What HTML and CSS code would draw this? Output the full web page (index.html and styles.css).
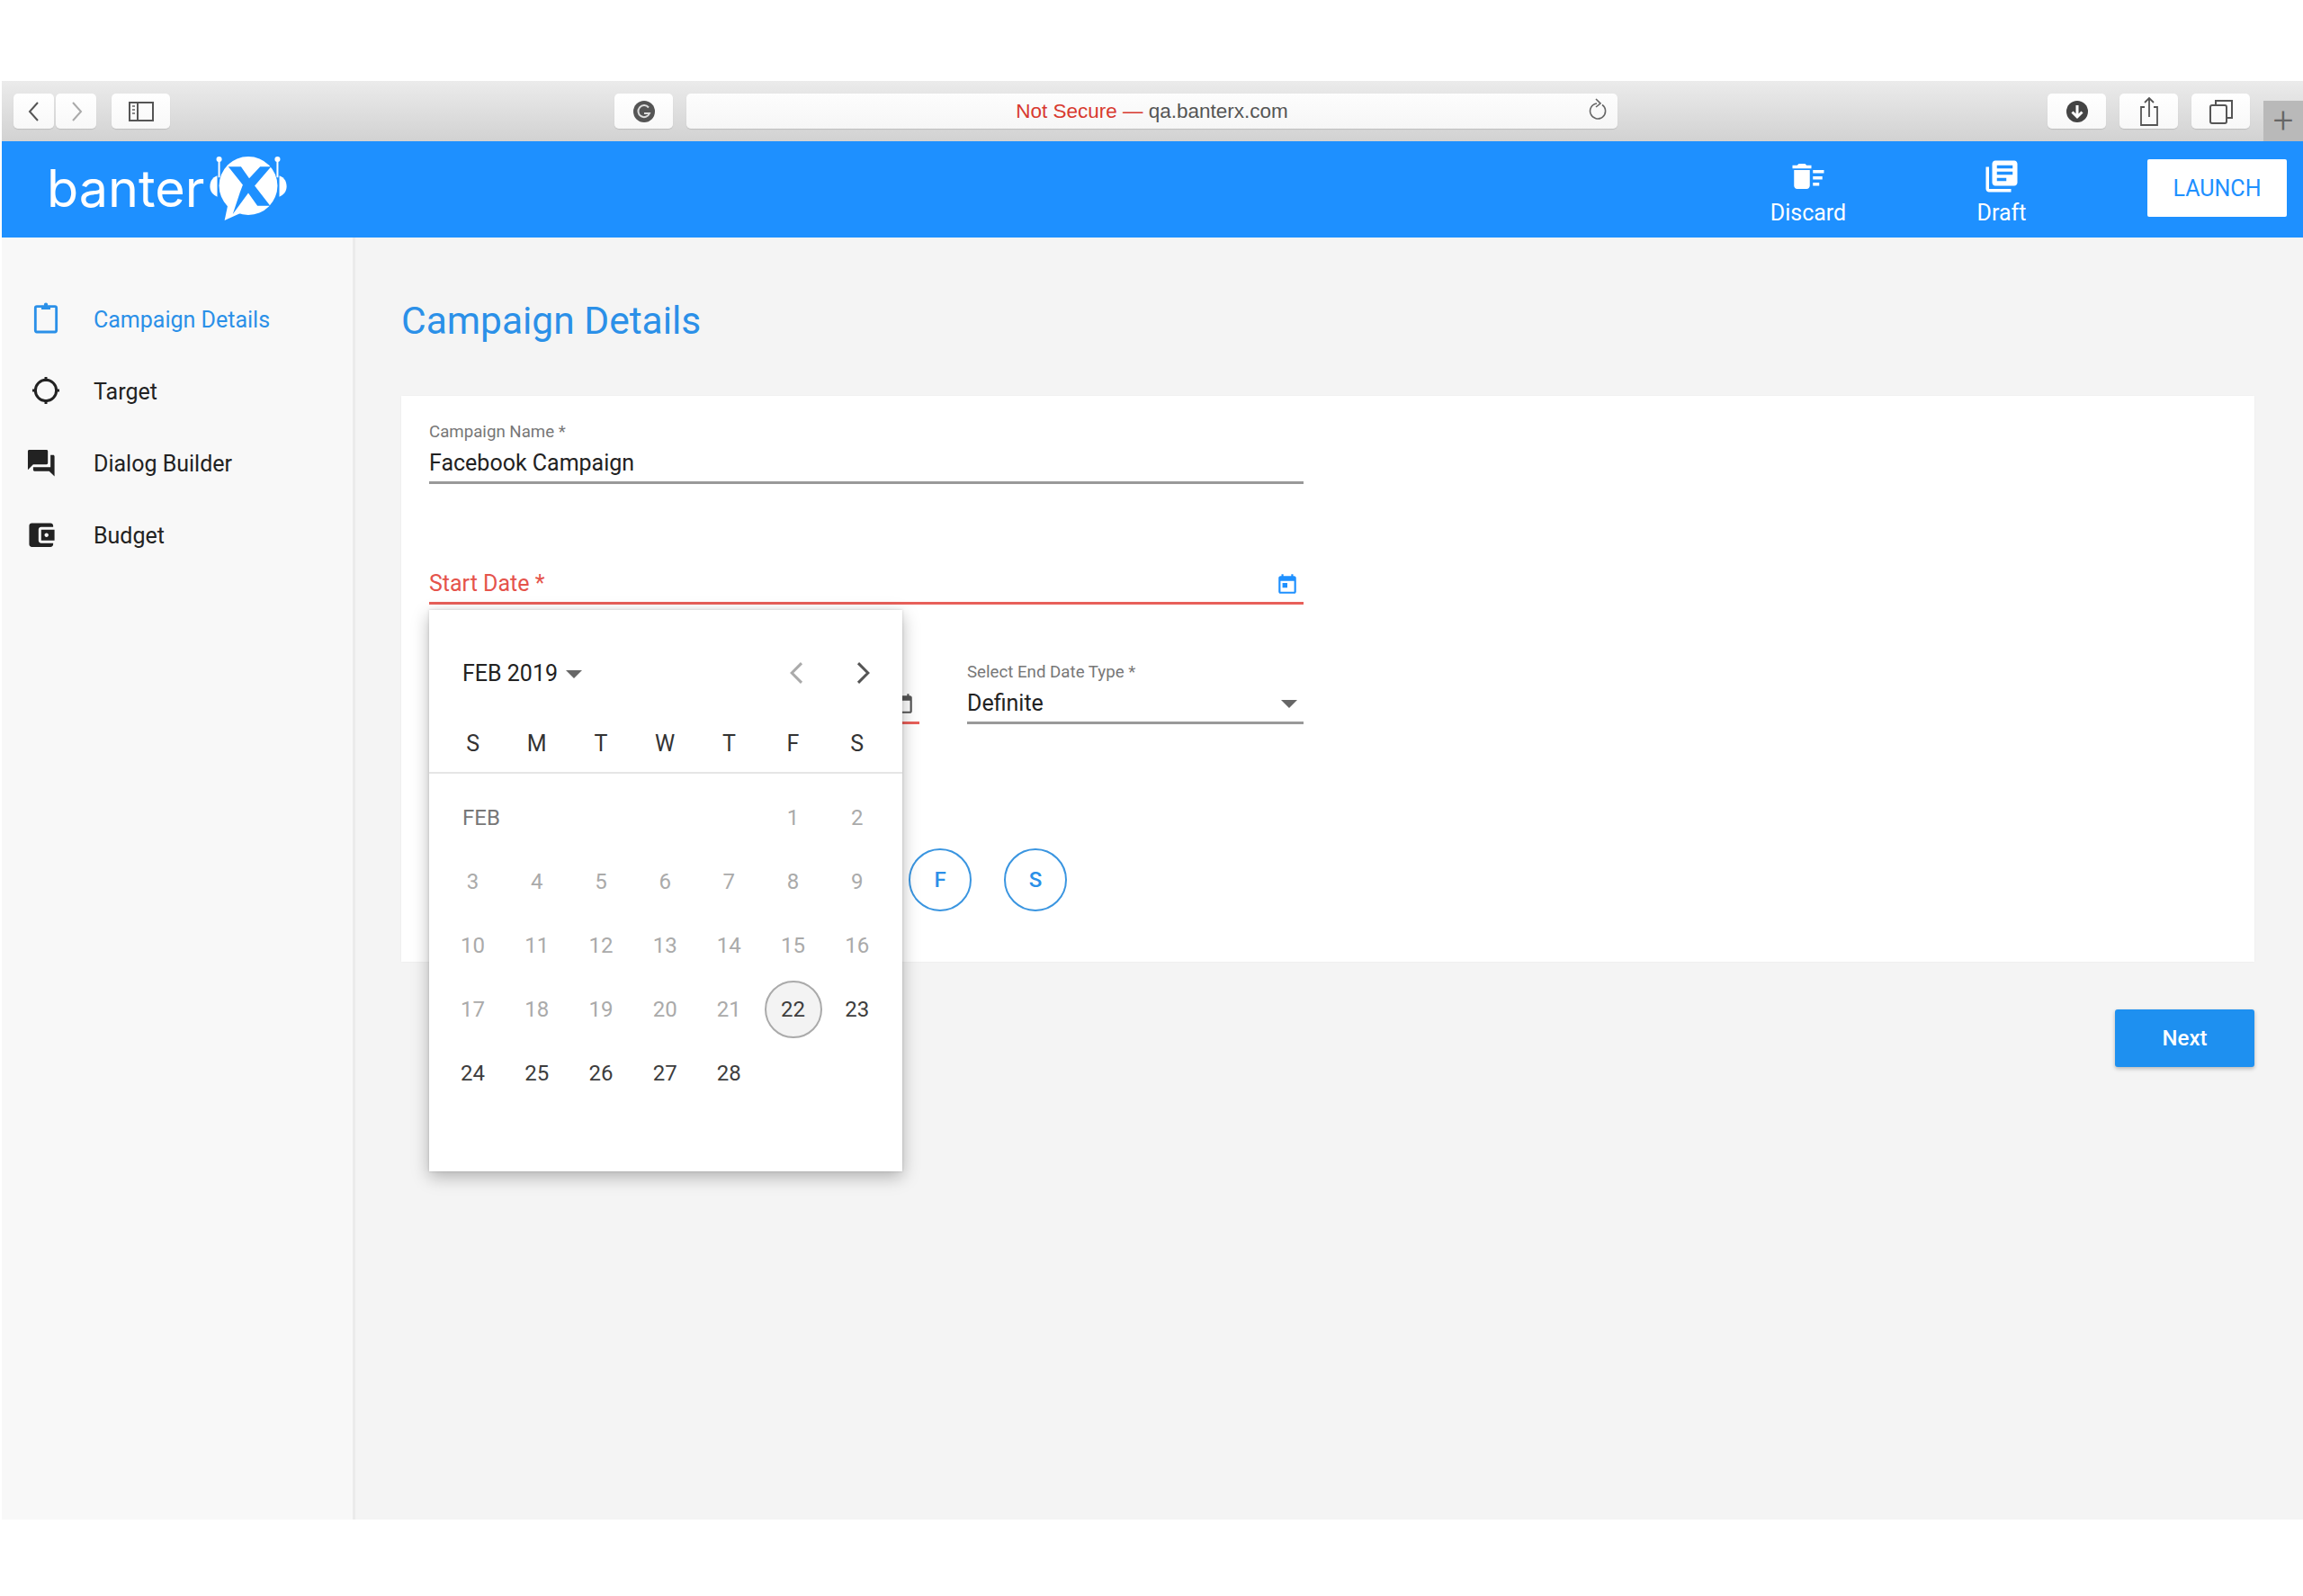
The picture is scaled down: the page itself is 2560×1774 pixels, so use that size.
FILE: index.html
```html
<!DOCTYPE html>
<html lang="en">
<head>
<meta charset="utf-8">
<title>banterX - Campaign Details</title>
<link rel="stylesheet" href="styles.css">
</head>
<body>
<div class="window">
  <div class="browser-bar">
    <div class="tb-group nav-group">
      <span class="tb-btn tb-nav"><svg width="22" height="26" viewBox="0 0 22 26"><path d="M15 3 6 13l9 10" fill="none" stroke="#555" stroke-width="2"/></svg></span>
      <span class="tb-btn tb-nav"><svg width="22" height="26" viewBox="0 0 22 26"><path d="m7 3 9 10-9 10" fill="none" stroke="#aaa" stroke-width="2"/></svg></span>
      <span class="tb-btn tb-wide sidebar-btn"><svg width="28" height="24" viewBox="0 0 28 24"><rect x="1" y="2" width="26" height="20" fill="none" stroke="#555" stroke-width="2"/><path d="M10 2v20" stroke="#555" stroke-width="2"/><path d="M4 6h3M4 10h3M4 14h3" stroke="#888" stroke-width="2"/></svg></span>
    </div>
    <span class="tb-btn tb-wide g-btn"><svg width="28" height="28" viewBox="0 0 28 28"><circle cx="14" cy="14" r="12" fill="#555"/><path d="M19 9.500a6.500 6.500 0 1 0 1 6.500h-6" fill="none" stroke="#ddd" stroke-width="2"/></svg></span>
    <div class="url-bar">
      <span class="url-text"><span class="url-warn">Not Secure —</span> qa.banterx.com</span>
      <svg class="reload" width="24" height="28" viewBox="0 0 24 28"><path d="M17 8.500a8.500 8.500 0 1 1-6-1.500" fill="none" stroke="#666" stroke-width="1.600"/><path d="m10 2 5 5-5 4" fill="none" stroke="#666" stroke-width="1.600"/></svg>
    </div>
    <div class="tb-group right-group">
      <span class="tb-btn tb-wide"><svg width="28" height="28" viewBox="0 0 28 28"><circle cx="14" cy="14" r="12" fill="#444"/><path d="M14 7v13M8.500 14.500 14 20l5.500-5.500" fill="none" stroke="#fff" stroke-width="3"/></svg></span>
      <span class="tb-btn tb-wide"><svg width="24" height="36" viewBox="0 0 24 36"><path d="M7 13H3v20h18V13h-4" fill="none" stroke="#555" stroke-width="1.800"/><path d="M12 24V3M7 8l5-5 5 5" fill="none" stroke="#555" stroke-width="1.800"/></svg></span>
      <span class="tb-btn tb-wide"><svg width="28" height="30" viewBox="0 0 28 30"><rect x="2" y="8" width="18" height="20" rx="2" fill="none" stroke="#555" stroke-width="2"/><path d="M8 8V3h18v19h-6" fill="none" stroke="#555" stroke-width="2"/></svg></span>
    </div>
    <span class="new-tab">+</span>
  </div>

  <header class="app-header">
    <div class="logo">
      <span class="logo-word">banter</span>
      <svg class="logo-mark" width="94" height="73" viewBox="0 0 92 72">
        <path d="M14 4v20M78 4v20" stroke="#fff" stroke-width="2"/>
        <circle cx="14" cy="4" r="3" fill="#fff"/><circle cx="78" cy="4" r="3" fill="#fff"/>
        <path d="M12 22c-6 2-8 7-8 12s3 9 8 11z" fill="#fff"/>
        <path d="M80 22c6 2 8 7 8 12s-3 9-8 11z" fill="#fff"/>
        <circle cx="46" cy="33" r="32" fill="#fff"/>
        <path d="M24 52 20 71l20-9z" fill="#fff"/>
        <path d="M24 12h14l9 13 12-13h12L53 33l17 22H56L46 41 29 64l8-24 3-8z" fill="#1e90ff"/>
      </svg>
    </div>
    <div class="header-actions">
      <div class="header-action action-discard">
        <svg width="42" height="42" viewBox="0 0 24 24"><path fill="#fff" d="M15 16h4v2h-4zm0-8h7v2h-7zm0 4h6v2h-6zM3 18c0 1.100.9 2 2 2h6c1.100 0 2-.9 2-2V8H3v10zM14 5h-3l-1-1H6L5 5H2v2h12z"/></svg>
        <span>Discard</span>
      </div>
      <div class="header-action action-draft">
        <svg width="42" height="42" viewBox="0 0 24 24"><path fill="#fff" d="M4 6H2v14c0 1.100.9 2 2 2h14v-2H4V6zm16-4H8c-1.100 0-2 .9-2 2v12c0 1.100.9 2 2 2h12c1.100 0 2-.9 2-2V4c0-1.100-.9-2-2-2zm-1 9H9V9h10v2zm-4 4H9v-2h6v2zm4-8H9V5h10v2z"/></svg>
        <span>Draft</span>
      </div>
      <button class="launch-btn">LAUNCH</button>
    </div>
  </header>

  <div class="app-body">
    <nav class="sidebar">
      <a class="nav-item is-active">
        <svg width="40" height="40" viewBox="-1.800 0 24 24"><path d="M6 4h12a1 1 0 0 1 1 1v15a1 1 0 0 1-1 1H6a1 1 0 0 1-1-1V5a1 1 0 0 1 1-1z" fill="none" stroke="#2b90e8" stroke-width="1.700"/><path d="M9 3.500h6V6H9z" fill="#2b90e8"/><circle cx="12" cy="2.800" r="1.300" fill="#2b90e8"/></svg>
        <span>Campaign Details</span>
      </a>
      <a class="nav-item">
        <svg width="40" height="40" viewBox="-1.800 0 24 24"><circle cx="12" cy="12" r="7" fill="none" stroke="#222" stroke-width="1.800"/><path d="M12 3v3M12 18v3M3 12h3M18 12h3" stroke="#222" stroke-width="1.800"/></svg>
        <span>Target</span>
      </a>
      <a class="nav-item">
        <svg width="40" height="40" viewBox="0 -2 27 27"><path fill="#222" d="M21 6h-2v9H6v2c0 .55.45 1 1 1h11l4 4V7c0-.55-.45-1-1-1zm-4 6V3c0-.55-.45-1-1-1H3c-.55 0-1 .45-1 1v14l4-4h10c.55 0 1-.45 1-1z"/></svg>
        <span>Dialog Builder</span>
      </a>
      <a class="nav-item">
        <svg width="40" height="40" viewBox="0 -2 27 27"><path fill="#222" d="M21 18v1c0 1.100-.9 2-2 2H5c-1.110 0-2-.9-2-2V5c0-1.100.89-2 2-2h14c1.100 0 2 .9 2 2v1h-9c-1.110 0-2 .9-2 2v8c0 1.100.89 2 2 2h9zm-9-2h10V8H12v8zm4-2.500c-.83 0-1.500-.67-1.500-1.500s.67-1.500 1.500-1.500 1.500.67 1.500 1.500-.67 1.500-1.500 1.500z"/></svg>
        <span>Budget</span>
      </a>
    </nav>

    <main class="main">
      <h1 class="page-title">Campaign Details</h1>
      <section class="card">
        <div class="field">
          <label class="field-label">Campaign Name *</label>
          <div class="field-value">Facebook Campaign</div>
        </div>
        <div class="field field-start">
          <div class="field-value is-error">Start Date *
            <svg class="cal-icon" width="26" height="26" viewBox="0 0 24 24"><path fill="#1e90ff" d="M19 4h-1V2h-2v2H8V2H6v2H5c-1.100 0-2 .9-2 2v14c0 1.100.9 2 2 2h14c1.100 0 2-.9 2-2V6c0-1.100-.9-2-2-2zm0 16H5V9h14v11zM7 11h5v5H7z"/></svg>
          </div>
        </div>
        <div class="field-row">
          <div class="field field-hidden">
            <div class="field-value is-error">
              <svg class="cal-icon cal-dark" width="26" height="26" viewBox="0 0 24 24"><path fill="#555" d="M19 4h-1V2h-2v2H8V2H6v2H5c-1.100 0-2 .9-2 2v14c0 1.100.9 2 2 2h14c1.100 0 2-.9 2-2V6c0-1.100-.9-2-2-2zm0 16H5V9h14v11z"/></svg>
            </div>
          </div>
          <div class="field">
            <label class="field-label">Select End Date Type *</label>
            <div class="field-value">Definite<i class="select-caret"></i></div>
          </div>
        </div>
        <div class="weekday-circles">
          <span class="day-circle"></span><span class="day-circle"></span><span class="day-circle"></span><span class="day-circle"></span><span class="day-circle"></span>
          <span class="day-circle">F</span><span class="day-circle">S</span>
        </div>

        <div class="datepicker">
          <div class="dp-head">
            <span class="dp-month">FEB 2019<i class="dp-caret"></i></span>
            <span class="dp-arrows">
              <svg width="40" height="40" viewBox="0 0 24 24"><path d="M15 5.500 8.500 12l6.500 6.500" fill="none" stroke="#aaa" stroke-width="1.800"/></svg>
              <svg width="40" height="40" viewBox="0 0 24 24"><path d="M9 5.500 15.500 12 9 18.500" fill="none" stroke="#555" stroke-width="1.800"/></svg>
            </span>
          </div>
          <div class="dp-week"><span>S</span><span>M</span><span>T</span><span>W</span><span>T</span><span>F</span><span>S</span></div>
          <div class="dp-grid">
            <span class="dp-label">FEB</span><span class="off">1</span><span class="off">2</span>
            <span class="off">3</span><span class="off">4</span><span class="off">5</span><span class="off">6</span><span class="off">7</span><span class="off">8</span><span class="off">9</span>
            <span class="off">10</span><span class="off">11</span><span class="off">12</span><span class="off">13</span><span class="off">14</span><span class="off">15</span><span class="off">16</span>
            <span class="off">17</span><span class="off">18</span><span class="off">19</span><span class="off">20</span><span class="off">21</span><span><b class="today">22</b></span><span>23</span>
            <span>24</span><span>25</span><span>26</span><span>27</span><span>28</span>
          </div>
        </div>
      </section>
      <div class="actions"><button class="next-btn">Next</button></div>
    </main>
  </div>
</div>
</body>
</html>
```

FILE: styles.css
```css
* { box-sizing: border-box; }
html, body { margin: 0; background: #fff; }
body { height: 1774px; padding: 90px 0 85px 2px; font-family: Roboto, "Liberation Sans", sans-serif; overflow: hidden; }
.window { height: 1599px; display: flex; flex-direction: column; }

.browser-bar { height: 67px; flex: none; display: flex; align-items: center; padding-left: 13px; position: relative; background: linear-gradient(#ebebeb, #d2d2d2); }
.tb-group { display: flex; }
.tb-btn { height: 39px; display: flex; align-items: center; justify-content: center; background: linear-gradient(#ffffff, #f8f8f8); border-radius: 5px; box-shadow: 0 1px 1px rgba(0,0,0,.12); }
.tb-nav { width: 45px; margin-right: 2px; }
.tb-wide { width: 65px; }
.sidebar-btn { margin-left: 15px; }
.g-btn { margin-left: 494px; }
.url-bar { width: 1035px; height: 39px; margin-left: 15px; position: relative; background: linear-gradient(#fdfdfd, #f6f6f6); border-radius: 5px; box-shadow: 0 1px 1px rgba(0,0,0,.12); display: flex; align-items: center; justify-content: center; }
.url-text { font-family: "Liberation Sans", Arial, sans-serif; font-size: 22.500px; color: #555; }
.url-warn { color: #d8392f; }
.reload { position: absolute; right: 10px; top: 4px; }
.right-group { margin-left: 478px; gap: 15px; }
.new-tab { position: absolute; right: 0; bottom: 0; width: 44px; height: 45px; background: #b9b9b9; color: #666; font: 300 40px/46px Roboto, sans-serif; text-align: center; }

.app-header { height: 107px; flex: none; display: flex; align-items: center; justify-content: space-between; background: #1e90ff; color: #fff; padding-left: 50px; }
.logo { display: flex; align-items: center; }
.logo-word { font-family: Inter, sans-serif; font-weight: 400; font-size: 57.500px; letter-spacing: 0; line-height: 1; margin-top: -2px; }
.logo-mark { margin-left: 2px; margin-top: -2px; }
.header-actions { display: flex; align-items: center; height: 100%; padding-right: 18px; }
.header-action { width: 130px; display: flex; flex-direction: column; align-items: center; font-size: 25px; line-height: 30px; margin-top: 5px; }
.header-action svg { display: block; margin-bottom: 5px; }
.action-draft { margin-left: 85px; }
.launch-btn { width: 155px; height: 64px; margin-left: 97px; margin-top: -3px; border: 0; border-radius: 2px; background: #fff; color: #1e90ff; font: 400 25px Roboto, sans-serif; }

.app-body { flex: 1; display: flex; min-height: 0; }
.sidebar { width: 393px; flex: none; background: #f8f8f8; border-right: 3px solid #ebebeb; padding-top: 51px; }
.nav-item { height: 80px; display: flex; align-items: center; padding-left: 26px; gap: 36px; font-size: 25px; color: #222; }
.nav-item svg { flex: none; width: 40px; margin-top: -2px; }
.nav-item.is-active { color: #2b90e8; }

.main { flex: 1; min-width: 0; background: #f4f4f4; padding: 63px 54px 0 51px; }
.page-title { margin: 0 0 53px; font-size: 42.500px; line-height: 60px; font-weight: 400; color: #2b90e8; }
.card { position: relative; height: 629px; background: #fff; padding: 30px 0 0 31px; box-shadow: 0 0 2px rgba(0,0,0,.05); }
.field { width: 972px; }
.field-label { display: block; font-size: 18.700px; line-height: 20px; color: #777; margin-bottom: 6px; }
.field-value { position: relative; height: 42px; font-size: 25px; line-height: 38px; color: #222; border-bottom: 3px solid #999; }
.field-start { margin-top: 92px; }
.is-error { color: #e5534b; border-bottom-color: #e8605a; }
.cal-icon { position: absolute; right: 5px; top: 6px; }
.field-row { display: grid; grid-template-columns: 545px 374px; column-gap: 53px; width: 972px; margin-top: 65px; }
.field-row .field { width: auto; align-self: end; }
.select-caret { position: absolute; right: 7px; top: 15px; border: 9px solid transparent; border-top: 9px solid #666; border-bottom: 0; }
.weekday-circles { display: flex; gap: 36px; margin-top: 138px; margin-left: 3px; }
.day-circle { width: 70px; height: 70px; display: flex; align-items: center; justify-content: center; border-radius: 50%; border: 2px solid #3a95e0; color: #2b90e8; font-size: 24px; font-weight: 500; }

.datepicker { position: absolute; left: 31px; top: 238px; width: 526px; height: 624px; padding-top: 40px; background: #fff; box-shadow: 0 6px 18px rgba(0,0,0,.28), 0 0 3px rgba(0,0,0,.15); }
.dp-head { display: flex; justify-content: space-between; align-items: center; height: 60px; padding: 0 24px 0 37px; }
.dp-month { display: flex; align-items: center; font-size: 25px; color: #222; }
.dp-caret { margin-left: 9px; margin-top: 3px; border: 9px solid transparent; border-top: 9px solid #666; border-bottom: 0; }
.dp-arrows { display: flex; gap: 33px; }
.dp-arrows svg { display: block; }
.dp-week { display: grid; grid-template-columns: repeat(7, 71.2px); height: 82px; padding: 16px 14px 0 13px; align-items: center; border-bottom: 2px solid #e5e5e5; font-size: 25px; font-weight: 400; color: #333; text-align: center; width: 100%; }
.dp-grid { display: grid; grid-template-columns: repeat(7, 71.2px); grid-auto-rows: 71.2px; padding: 13px 14px 0 13px; align-items: center; font-size: 24px; color: #3d3d3d; text-align: center; }
.dp-label { grid-column: span 5; text-align: left; padding-left: 24px; color: #777; }
.off { color: #aaa; }
.today { display: block; width: 64px; height: 64px; margin: 0 auto; border-radius: 50%; border: 2px solid #aaa; background: #f3f3f3; font-weight: 400; line-height: 60px; }

.actions { display: flex; justify-content: flex-end; margin-top: 53px; }
.next-btn { width: 155px; height: 64px; border: 0; border-radius: 3px; background: #1e90f0; color: #fff; font: 500 24px Roboto, sans-serif; box-shadow: 0 2px 4px rgba(0,0,0,.25); }
```
